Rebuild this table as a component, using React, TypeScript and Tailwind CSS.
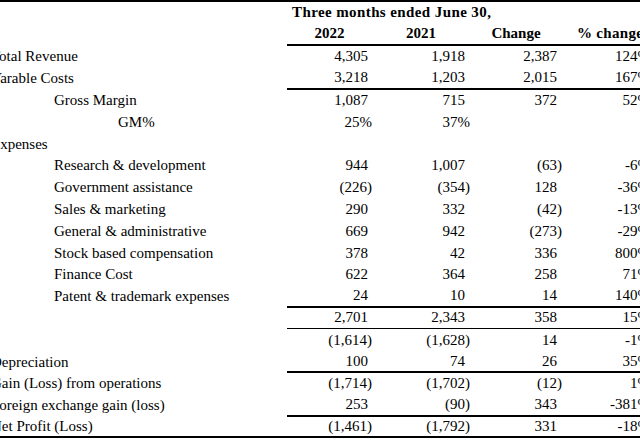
import React from 'react';

type Row = {
  label: string;
  indent: 'main' | 'sub' | 'gm' | 'none';
  values: string[];
  line?: 'thick' | 'thin';
};

const rows: Row[] = [
  { label: 'Total Revenue', indent: 'main', values: ['4,305', '1,918', '2,387', '124%'] },
  { label: 'Varable Costs', indent: 'main', values: ['3,218', '1,203', '2,015', '167%'], line: 'thick' },
  { label: 'Gross Margin', indent: 'sub', values: ['1,087', '715', '372', '52%'] },
  { label: 'GM%', indent: 'gm', values: ['25%', '37%', '', ''] },
  { label: 'Expenses', indent: 'main', values: ['', '', '', ''] },
  { label: 'Research & development', indent: 'sub', values: ['944', '1,007', '(63)', '-6%'] },
  { label: 'Government assistance', indent: 'sub', values: ['(226)', '(354)', '128', '-36%'] },
  { label: 'Sales & marketing', indent: 'sub', values: ['290', '332', '(42)', '-13%'] },
  { label: 'General & administrative', indent: 'sub', values: ['669', '942', '(273)', '-29%'] },
  { label: 'Stock based compensation', indent: 'sub', values: ['378', '42', '336', '800%'] },
  { label: 'Finance Cost', indent: 'sub', values: ['622', '364', '258', '71%'] },
  { label: 'Patent & trademark expenses', indent: 'sub', values: ['24', '10', '14', '140%'], line: 'thick' },
  { label: '', indent: 'none', values: ['2,701', '2,343', '358', '15%'], line: 'thin' },
  { label: '', indent: 'none', values: ['(1,614)', '(1,628)', '14', '-1%'] },
  { label: 'Depreciation', indent: 'main', values: ['100', '74', '26', '35%'], line: 'thick' },
  { label: 'Gain (Loss) from operations', indent: 'main', values: ['(1,714)', '(1,702)', '(12)', '1%'] },
  { label: 'Foreign exchange gain (loss)', indent: 'main', values: ['253', '(90)', '343', '-381%'], line: 'thick' },
  { label: 'Net Profit (Loss)', indent: 'main', values: ['(1,461)', '(1,792)', '331', '-18%'] },
];

// pad positives so they line up with the closing paren of negatives
function cellPad(v: string, col: number) {
  if (v.endsWith(')') || v.endsWith('%')) return 'pr-0';
  return col === 0 ? 'pr-[4px]' : 'pr-[5px]';
}

const labelIndent = {
  main: '-ml-[9px]',
  sub: 'pl-[54px]',
  gm: 'pl-[118px]',
  none: '',
};

export default function App() {
  return (
    <div
      className="w-[640px] h-[440px] overflow-hidden bg-white text-black text-[15px] leading-none"
      style={{ fontFamily: '"Liberation Serif", "Times New Roman", serif' }}
    >
      <div className="w-[650px] border-t-2 border-black">
        {/* title */}
        <div className="grid grid-cols-[287px_363px] h-[21px]">
          <div />
          <div className="flex items-center pl-[5px] font-bold tracking-[0.4px] whitespace-nowrap">
            Three months ended June 30,
          </div>
        </div>
        {/* column headers */}
        <div className="grid grid-cols-[287px_85px_98px_92px_88px] h-[23px]">
          <div />
          <div className="flex items-center justify-center font-bold border-b-2 border-black">2022</div>
          <div className="flex items-center justify-center font-bold border-b-2 border-black">2021</div>
          <div className="flex items-center justify-center font-bold border-b-2 border-black">Change</div>
          <div className="flex items-center justify-start pl-[15px] font-bold tracking-[0.3px] border-b-2 border-black whitespace-nowrap">
            % change
          </div>
        </div>
        {/* body */}
        {rows.map((r, i) => {
          const last = i === rows.length - 1;
          const line =
            r.line === 'thick'
              ? 'border-b-2 border-black'
              : r.line === 'thin'
              ? 'border-b border-black'
              : '';
          return (
            <div
              key={i}
              className={`grid grid-cols-[287px_85px_98px_92px_88px] h-[21.8px] ${
                last ? 'border-b-2 border-black' : ''
              }`}
            >
              <div className={`flex items-center whitespace-nowrap ${labelIndent[r.indent]}`}>{r.label}</div>
              {r.values.map((v, c) => (
                <div
                  key={c}
                  className={`flex items-center justify-end whitespace-nowrap ${cellPad(v, c)} ${line}`}
                >
                  {v}
                </div>
              ))}
            </div>
          );
        })}
      </div>
    </div>
  );
}
